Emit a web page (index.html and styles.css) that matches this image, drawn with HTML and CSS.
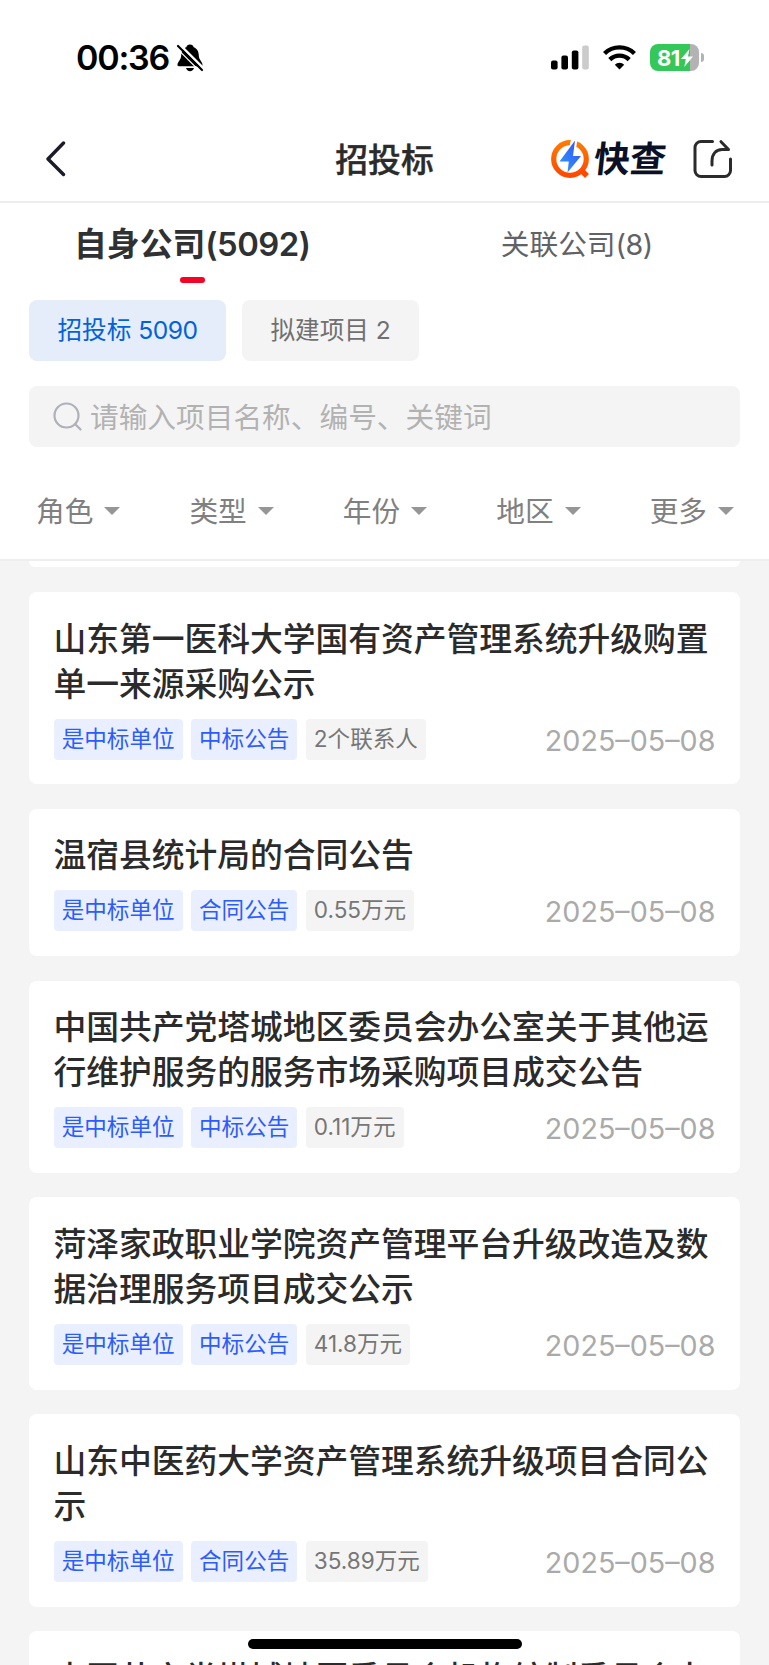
FILE: index.html
```html
<!DOCTYPE html>
<html lang="zh-CN">
<head>
    <meta charset="UTF-8">
    <meta name="viewport" content="width=device-width, initial-scale=1.0">
    <title>招投标</title>
    <link rel="stylesheet" href="styles.css">
</head>
<body>
<div class="page">
    <div class="status-bar">
        <span class="time">00:36</span>
        <svg class="bell" width="28" height="30" viewBox="0 0 28 30">
            <path d="M14 1.5c-2 0-3.400 1.200-3.700 2.800C6.500 5.700 5.300 9 5.200 12.500 5.100 17 1.500 18.500 1.500 22c0 .8.500 1.200 1.300 1.200h22.400c.8 0 1.300-.4 1.300-1.200 0-3.500-3.600-5-3.700-9.500-.1-3.500-1.300-6.800-5.100-8.200C17.400 2.700 16 1.500 14 1.500z"/>
            <path d="M10 25h8c-.5 1.900-2 3.200-4 3.200s-3.500-1.300-4-3.200z"/>
            <path d="M3.500 1.300 28.500 26.300" stroke="#fff" stroke-width="2.400"/>
            <path d="M2 3 26 27" stroke="#000" stroke-width="2.200" stroke-linecap="round"/>
            <path d="M-1 3.500 23 27.500" stroke="#fff" stroke-width="1.200"/>
        </svg>
        <div class="status-icons">
            <svg width="38" height="25" viewBox="0 0 38 25">
                <rect x="0" y="15.500" width="6.600" height="9" rx="2"/>
                <rect x="10.400" y="10.500" width="6.600" height="14" rx="2"/>
                <rect x="20.800" y="5.500" width="6.600" height="19" rx="2"/>
                <rect x="31.200" y=".5" width="6.600" height="24" rx="2" fill="#cbcbcb"/>
            </svg>
            <svg class="wifi" width="33" height="25" viewBox="0 0 33 25" fill="none" stroke="#000" stroke-width="4.400">
                <path d="M1.500 8.500a21.500 21.500 0 0 1 30 0"/>
                <path d="M6.800 14.600a13.800 13.800 0 0 1 19.400 0"/>
                <path d="M16.500 24.500l-4.700-4.700a6.600 6.600 0 0 1 9.400 0z" fill="#000" stroke="none"/>
            </svg>
            <div class="battery">
                <span>81</span>
                <svg width="12" height="18" viewBox="0 0 12 18"><path d="M8.500 0 0 10h4.800L3.300 18 12 7.500H7z" fill="#fff"/></svg>
            </div>
            <i class="battery-tip"></i>
        </div>
    </div>

    <div class="nav">
        <svg class="back" width="20" height="36" viewBox="0 0 20 36" fill="none" stroke="#1b1b2b" stroke-width="3.400" stroke-linecap="round" stroke-linejoin="round">
            <path d="M17.500 2 2 18l15.500 15.500"/>
        </svg>
        <h1>招投标</h1>
        <div class="nav-right">
            <svg width="39" height="40" viewBox="0 0 39 40">
                <defs>
                    <linearGradient id="ring" x1="0" y1="0" x2="0" y2="1">
                        <stop offset="0" stop-color="#ff7a00"/>
                        <stop offset="1" stop-color="#ff4800"/>
                    </linearGradient>
                    <linearGradient id="bolt" x1="1" y1="0" x2="0" y2="1">
                        <stop offset="0" stop-color="#3a4cf0"/>
                        <stop offset="1" stop-color="#2aa0ff"/>
                    </linearGradient>
                </defs>
                <circle cx="19" cy="20" r="16.300" fill="none" stroke="url(#ring)" stroke-width="5.200"/>
                <path d="M30.500 31.500l5.500 5.500" stroke="#ff4800" stroke-width="5.500"/>
                <path d="M20 0h6.500l-1.500 10h-7z" fill="#fff"/>
                <path d="M24 1.500 8.500 22.500h9.300L16.500 33.500 30 17h-8z" fill="url(#bolt)"/>
            </svg>
            <span class="brand">快查</span>
            <svg class="share" width="40" height="40" viewBox="0 0 40 40" fill="none" stroke="#2b2b2b" stroke-width="3" stroke-linecap="round" stroke-linejoin="round">
                <path d="M19.500 2.500H8a6 6 0 0 0-6 6v23a6 6 0 0 0 6 6h23.500a6 6 0 0 0 6-6V20"/>
                <path d="M19 26v-4c0-7 4-11.500 10-11.500h6.500L28 2.700"/>
            </svg>
        </div>
    </div>

    <div class="tabs">
        <div class="tab active">自身公司<span>(5092)</span></div>
        <div class="tab">关联公司<span>(8)</span></div>
    </div>

    <div class="chips">
        <div class="chip active">招投标 <span>5090</span></div>
        <div class="chip">拟建项目 <span>2</span></div>
    </div>

    <div class="search">
        <svg width="30" height="30" viewBox="0 0 30 30" fill="none" stroke="#aeb0ba" stroke-width="2.200" stroke-linecap="round">
            <circle cx="13.500" cy="13.500" r="12"/>
            <path d="M22.300 22.300l5.200 5.200"/>
        </svg>
        <span>请输入项目名称、编号、关键词</span>
    </div>

    <div class="filters">
        <div class="filter">角色</div>
        <div class="filter">类型</div>
        <div class="filter">年份</div>
        <div class="filter">地区</div>
        <div class="filter">更多</div>
    </div>

    <div class="list">
        <div class="card-end"></div>
        <div class="card">
            <h2>山东第一医科大学国有资产管理系统升级购置单一来源采购公示</h2>
            <div class="meta">
                <span class="tag blue">是中标单位</span>
                <span class="tag blue">中标公告</span>
                <span class="tag">2个联系人</span>
                <span class="date">2025–05–08</span>
            </div>
        </div>
        <div class="card">
            <h2>温宿县统计局的合同公告</h2>
            <div class="meta">
                <span class="tag blue">是中标单位</span>
                <span class="tag blue">合同公告</span>
                <span class="tag">0.55万元</span>
                <span class="date">2025–05–08</span>
            </div>
        </div>
        <div class="card">
            <h2>中国共产党塔城地区委员会办公室关于其他运行维护服务的服务市场采购项目成交公告</h2>
            <div class="meta">
                <span class="tag blue">是中标单位</span>
                <span class="tag blue">中标公告</span>
                <span class="tag">0.11万元</span>
                <span class="date">2025–05–08</span>
            </div>
        </div>
        <div class="card">
            <h2>菏泽家政职业学院资产管理平台升级改造及数据治理服务项目成交公示</h2>
            <div class="meta">
                <span class="tag blue">是中标单位</span>
                <span class="tag blue">中标公告</span>
                <span class="tag">41.8万元</span>
                <span class="date">2025–05–08</span>
            </div>
        </div>
        <div class="card">
            <h2>山东中医药大学资产管理系统升级项目合同公示</h2>
            <div class="meta">
                <span class="tag blue">是中标单位</span>
                <span class="tag blue">合同公告</span>
                <span class="tag">35.89万元</span>
                <span class="date">2025–05–08</span>
            </div>
        </div>
        <div class="card">
            <h2>中国共产党塔城地区委员会机构编制委员会办</h2>
        </div>
    </div>

    <div class="home-indicator"></div>
</div>
</body>
</html>
```

FILE: styles.css
```css
* {
    box-sizing: border-box;
}
body {
    margin: 0;
    background-color: #f4f4f4;
    font-family: Inter, "Noto Sans CJK SC", sans-serif;
    color: #2b2b2b;
}
.page {
    position: relative;
    width: 769px;
    height: 1665px;
    overflow: hidden;
    display: flex;
    flex-direction: column;
    background-color: #fff;
}
.page > div {
    flex-shrink: 0;
}
.status-bar {
    height: 115px;
    padding: 0 65px 0 76px;
    display: flex;
    align-items: center;
    color: #000;
}
.time {
    font-size: 34px;
    font-weight: 600;
    letter-spacing: -1.2px;
}
.bell {
    margin-left: 7px;
}
.status-icons {
    margin-left: auto;
    display: flex;
    align-items: center;
}
.wifi {
    margin-left: 14px;
}
.battery {
    width: 49px;
    height: 27px;
    margin-left: 14px;
    padding-left: 7px;
    border-radius: 8px;
    display: flex;
    align-items: center;
    background: linear-gradient(90deg, #34c759 40px, #b3b3b3 40px);
    color: #fff;
    font-size: 22px;
    font-weight: 700;
    letter-spacing: -0.5px;
}
.battery svg {
    margin-left: 1px;
}
.battery-tip {
    width: 3px;
    height: 9px;
    margin-left: 2px;
    border-radius: 0 3px 3px 0;
    background-color: #b3b3b3;
}
.nav {
    height: 88px;
    padding: 0 36px 0 46px;
    display: grid;
    grid-template-columns: 1fr auto 1fr;
    align-items: center;
    border-bottom: 2px solid #ededed;
}
.back {
    margin-top: 2px;
}
.nav h1 {
    margin: 0;
    padding: 0 10px 2px 0;
    font-size: 32.8px;
    font-weight: 500;
    -webkit-text-stroke: 0.4px #2b2b2b;
}
.nav-right {
    display: flex;
    align-items: center;
    justify-content: flex-end;
    padding-top: 1px;
}
.brand {
    margin-left: 4px;
    color: #0b1024;
    font-size: 36px;
    font-weight: 700;
    line-height: 40px;
    transform: skewX(-6deg);
}
.share {
    margin-left: 27px;
}
.tabs {
    height: 97px;
    display: flex;
}
.tab {
    position: relative;
    flex: 1;
    line-height: 83px;
    text-align: center;
    font-size: 28.7px;
    color: #606266;
}
.tab span {
    letter-spacing: -0.5px;
}
.tab.active {
    font-size: 32.8px;
    font-weight: 600;
    color: #303133;
}
.tab.active::after {
    content: "";
    position: absolute;
    left: 50%;
    top: 74px;
    width: 25px;
    height: 6px;
    margin-left: -12px;
    border-radius: 3px;
    background-color: #f50525;
}
.chips {
    display: flex;
    gap: 16px;
    padding: 0 29px;
}
.chip {
    height: 61px;
    padding: 0 28.5px;
    border-radius: 8px;
    line-height: 61px;
    font-size: 24.6px;
    background-color: #f4f4f4;
    color: #707070;
    white-space: nowrap;
}
.chip span {
    letter-spacing: -0.5px;
}
.chip.active {
    background-color: #e5edfb;
    color: #0062dc;
}
.search {
    height: 61px;
    margin: 25px 29px 0;
    padding-left: 24px;
    border-radius: 8px;
    display: flex;
    align-items: center;
    gap: 7px;
    background-color: #f4f4f4;
    color: #b2b2b2;
    font-size: 28.7px;
}
.search span {
    padding-bottom: 2px;
}
.filters {
    height: 112px;
    padding: 13px 35px 0 36px;
    display: flex;
    align-items: center;
    justify-content: space-between;
    font-size: 28.7px;
    color: #808080;
}
.filter {
    display: flex;
    align-items: center;
    gap: 11px;
}
.filter::after {
    content: "";
    margin-top: 2px;
    border: 8px solid transparent;
    border-top-color: #969696;
    border-bottom: none;
}
.list {
    height: 1106px;
    padding: 0 29px;
    border-top: 2px solid #eee;
    background-color: #f4f4f4;
}
.card-end {
    height: 6px;
    margin-bottom: 25px;
    border-radius: 0 0 8px 8px;
    background-color: #fff;
}
.card {
    margin-bottom: 24.7px;
    padding: 24.6px;
    border-radius: 8px;
    background-color: #fff;
}
.card h2 {
    margin: 0 0 11.8px;
    font-size: 32.8px;
    font-weight: 500;
    line-height: 45.1px;
    letter-spacing: -0.05px;
    word-break: break-all;
}
.meta {
    height: 41px;
    display: flex;
    align-items: center;
    gap: 8.2px;
}
.tag {
    height: 41px;
    padding: 0 8.2px;
    border-radius: 4px;
    line-height: 39px;
    font-size: 22.55px;
    background-color: #f4f4f4;
    color: #767676;
}
.tag.blue {
    background-color: #e9effe;
    color: #2a5cff;
}
.date {
    margin-left: auto;
    padding-top: 2px;
    font-size: 28.7px;
    color: #aaa;
}
.home-indicator {
    position: absolute;
    left: 248px;
    bottom: 16px;
    width: 274px;
    height: 10px;
    border-radius: 5px;
    background-color: #000;
}
```
